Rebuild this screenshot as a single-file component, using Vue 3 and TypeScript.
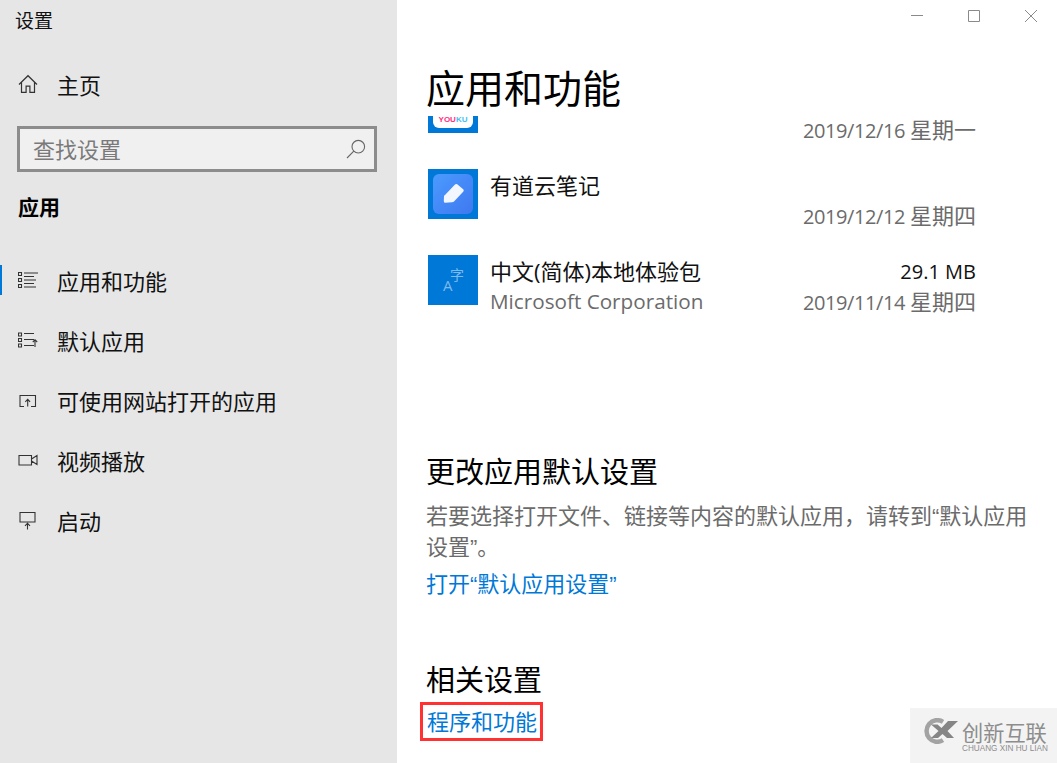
<script setup lang="ts">
interface NavItem { label: string; icon: string; active?: boolean }
const nav: NavItem[] = [
  { label: '应用和功能', icon: 'list', active: true },
  { label: '默认应用', icon: 'defaults' },
  { label: '可使用网站打开的应用', icon: 'web' },
  { label: '视频播放', icon: 'video' },
  { label: '启动', icon: 'startup' },
]
</script>

<template>
  <div class="window">
    <aside class="side">
      <div class="app-title">设置</div>
      <div class="home">
        <svg class="ico" width="20" height="20" viewBox="0 0 20 20" fill="none" stroke="#333" stroke-width="1.2">
          <path d="M1 10.5 10 1.7l9 8.800M3.500 8.500v9.800h4.600v-6.200h3.800v6.200h4.600V8.500" />
        </svg>
        <span>主页</span>
      </div>
      <div class="search">
        <span class="placeholder">查找设置</span>
        <svg width="20" height="20" viewBox="0 0 20 20" fill="none" stroke="#666" stroke-width="1.1">
          <circle cx="12.3" cy="7.7" r="6.3" />
          <path d="M7.8 12.2 1 19" />
        </svg>
      </div>
      <div class="group">应用</div>
      <nav class="nav">
        <div v-for="item in nav" :key="item.label" class="nav-item" :class="{ active: item.active }">
          <svg class="nav-ico" width="20" height="20" viewBox="0 0 20 20" fill="none" stroke="#333" stroke-width="1.1">
            <template v-if="item.icon === 'list'">
              <path d="M.5 2.500h3v3h-3zM.5 8.500h3v3h-3zM.5 14.500h3v3h-3z" />
              <path d="M6 3h14M6 6.500h10M6 10h12M6 13.500h10M6 17h12" />
            </template>
            <template v-else-if="item.icon === 'defaults'">
              <path d="M.5 3h3v3h-3zM.5 8.500h3v3h-3zM.5 14h3v3h-3z" />
              <path d="M6 3.500h10M6 9.500h10M6 15.500h10M17 17V10M14.800 12 17 9.700l2.200 2.300" />
            </template>
            <template v-else-if="item.icon === 'web'">
              <path d="M6 16.500H2V5.500h15.500v11H13M9.700 16.500V9.500M7.300 11.800l2.400-2.400 2.400 2.400" />
            </template>
            <template v-else-if="item.icon === 'video'">
              <path d="M1 5.500h12.500v9.500H1zM13.500 9 19 5.500v9L13.500 11" />
            </template>
            <template v-else>
              <path d="M2 2.500h15v9.500H2zM9.500 19.500V13.500M7 15.800l2.500-2.500 2.500 2.500" />
            </template>
          </svg>
          <span>{{ item.label }}</span>
        </div>
      </nav>
    </aside>

    <main class="content">
      <div class="controls">
        <svg width="12" height="12" viewBox="0 0 12 12" stroke="#8a8a8a" fill="none"><path d="M0 5.500h12" /></svg>
        <svg width="12" height="12" viewBox="0 0 12 12" stroke="#8a8a8a" fill="none"><path d="M.5.500h11v11H.5z" /></svg>
        <svg width="12" height="12" viewBox="0 0 12 12" stroke="#8a8a8a" fill="none"><path d="M0 0l12 12M12 0 0 12" /></svg>
      </div>
      <h1>应用和功能</h1>

      <div class="apps">
        <div class="app app-clipped">
          <div class="tile tile-clip">
            <div class="youku">
              <span class="yk-a">YOU</span><span class="yk-b">KU</span>
            </div>
          </div>
          <div class="date date-clip"><span class="num">2019/12/16</span> 星期一</div>
        </div>

        <div class="app">
          <div class="tile">
            <svg width="50" height="50" viewBox="0 0 50 50">
              <defs>
                <linearGradient id="yd" x1="0" y1="0" x2="1" y2="1">
                  <stop offset="0" stop-color="#4a9bff" />
                  <stop offset="1" stop-color="#3f78f0" />
                </linearGradient>
              </defs>
              <rect x="5" y="5" width="40" height="40" rx="6" fill="url(#yd)" />
              <path d="M17 26 27 15.500q1-1 2.200-.2l6 5q1 1 .2 2.200L26 32.500q-.8.700-2 .8l-6.700.5q-1.500 0-1.500-1.500l.2-5q0-1 1-1.300z" fill="#f2f7ff" />
            </svg>
          </div>
          <div class="app-body">
            <div class="line">
              <span class="name">有道云笔记</span>
            </div>
            <div class="line">
              <span class="pub"></span>
              <span class="date"><span class="num">2019/12/12</span> 星期四</span>
            </div>
          </div>
        </div>

        <div class="app">
          <div class="tile">
            <svg width="50" height="50" viewBox="0 0 50 50">
              <text x="15" y="36" class="lang-a">A</text>
              <text x="22" y="25" class="lang-z">字</text>
            </svg>
          </div>
          <div class="app-body">
            <div class="line">
              <span class="name">中文(简体)本地体验包</span>
              <span class="size">29.1 MB</span>
            </div>
            <div class="line">
              <span class="pub">Microsoft Corporation</span>
              <span class="date"><span class="num">2019/11/14</span> 星期四</span>
            </div>
          </div>
        </div>
      </div>

      <section class="sec-default">
        <h2>更改应用默认设置</h2>
        <p>若要选择打开文件、链接等内容的默认应用，请转到<span class="q">“</span>默认应用设置<span class="q">”</span>。</p>
        <a class="link">打开<span class="q">“</span>默认应用设置<span class="q">”</span></a>
      </section>

      <section class="sec-related">
        <h2>相关设置</h2>
        <a class="link boxed">程序和功能</a>
      </section>

      <div class="watermark">
        <svg width="35" height="26" viewBox="0 0 35 26">
          <path d="M20 3.800A10.800 10.800 0 1 0 20 22.200" fill="none" stroke="#a3a3a3" stroke-width="4.500" />
          <path d="M8 6.500h6.500l4 3.500L25 3h10l-10.500 10 6.500 7h-7l-4.500-4-4.500 4H8l7.500-7z" fill="#858585" />
        </svg>
        <div class="wm-text">
          <div class="wm-cn">创新互联</div>
          <div class="wm-en">CHUANG XIN HU LIAN</div>
        </div>
      </div>
    </main>
  </div>
</template>

<style>
html, body { margin: 0; height: 763px; overflow: hidden; background: #fff; }
</style>

<style scoped>
.window {
  display: flex;
  width: 1057px;
  height: 763px;
  overflow: hidden;
  font-family: "Noto Sans CJK SC", "Noto Sans", sans-serif;
  color: #111;
  background: #fff;
}
.side {
  flex: none;
  width: 397px;
  box-sizing: border-box;
  background: #e6e6e6;
  display: flex;
  flex-direction: column;
}
.app-title { margin: 6px 0 0 15px; font-size: 19px; line-height: 28px; }
.home {
  display: flex;
  align-items: center;
  gap: 19px;
  margin: 35px 0 0 18px;
  font-size: 22px;
  line-height: 30px;
}
.ico { flex: none; }
.search {
  box-sizing: border-box;
  display: flex;
  align-items: center;
  justify-content: space-between;
  width: 360px;
  height: 46px;
  margin: 27px 0 0 17px;
  padding: 0 8px 0 13px;
  border: 3px solid #8c8c8c;
  background: #f0f0f0;
}
.placeholder { font-size: 22px; line-height: 30px; margin-top: -2px; color: #7a7a7a; }
.group { margin: 19px 0 0 18px; font-size: 21px; line-height: 30px; font-weight: 700; color: #000; }
.nav { display: flex; flex-direction: column; margin-top: 29px; }
.nav-item {
  display: flex;
  align-items: center;
  gap: 19px;
  height: 60px;
  padding-left: 18px;
  font-size: 22px;
  position: relative;
}
.nav-item.active::before {
  content: "";
  position: absolute;
  left: 0;
  top: 15px;
  width: 2px;
  height: 30px;
  background: #0078d7;
}
.nav-ico { flex: none; }

.content {
  flex: 1;
  position: relative;
  min-width: 0;
  padding-left: 30px;
  padding-right: 30px;
  display: flex;
  flex-direction: column;
}
.controls {
  display: flex;
  justify-content: flex-end;
  gap: 45px;
  margin-right: -10px;
  padding-top: 10px;
  height: 12px;
}
h1 { margin: 35px 0 1px -1px; font-size: 39px; line-height: 58px; font-weight: 400; color: #000; }
.apps { display: flex; flex-direction: column; margin-right: 51px; }
.app { display: flex; gap: 12px; margin-left: 1px; margin-bottom: 25px; }
.app-clipped { justify-content: space-between; margin-bottom: 36px; height: 17px; }
.tile { flex: none; width: 50px; height: 50px; background: #0078d7; }
.tile-clip { height: 17px; overflow: hidden; display: flex; justify-content: center; align-items: flex-end; }
.youku {
  box-sizing: border-box;
  width: 40px;
  height: 12px;
  margin-bottom: 5px;
  background: #fff;
  border-radius: 0 0 6px 6px;
  text-align: center;
  font: 700 8px/8px "Liberation Sans", sans-serif;
}
.yk-a { color: #ff2e7e; }
.yk-b { color: #3ec3f5; }
.lang-a { font: 15px "Open Sans", sans-serif; fill: #7db8ef; }
.lang-z { font: 14px "Noto Sans CJK SC", sans-serif; fill: #7db8ef; }
.date { font-size: 22px; line-height: 30px; color: #6b6b6b; white-space: nowrap; }
.line .date { margin-top: -1px; }
.date-clip { margin-top: -3px; }
.num { font-family: "Open Sans", sans-serif; font-size: 20px; letter-spacing: -0.4px; }
.app-body { flex: 1; display: flex; flex-direction: column; margin-top: 1px; }
.line { display: flex; justify-content: space-between; height: 30px; line-height: 30px; font-size: 22px; white-space: nowrap; }
.name { color: #111; font-family: "Open Sans", "Noto Sans CJK SC", sans-serif; }
.size { color: #111; margin-top: 1px; font-family: "Open Sans", sans-serif; font-size: 20px; }
.pub { color: #6b6b6b; font-family: "Open Sans", sans-serif; font-size: 20.7px; }

h2 { margin: 0 0 0 -1px; font-size: 29px; line-height: 40px; font-weight: 400; color: #000; }
.sec-default { margin-top: 109px; }
.sec-default p { margin: 9px -8px 0 -1px; font-size: 22px; line-height: 31px; color: #6b6b6b; }
.q { font-family: "Liberation Sans", sans-serif; line-height: 1; }
.link { display: block; margin-left: -1px; font-size: 22px; line-height: 30px; color: #0078d7; }
.sec-default .link { margin-top: 6px; }
.sec-related { margin-top: 61px; }
.boxed {
  width: max-content;
  margin: 4px 0 0 -7px;
  padding: 0 3px 3px 4px;
  border: 3px solid #ff3131;
}
.watermark {
  position: absolute;
  right: 0;
  bottom: 0;
  box-sizing: border-box;
  width: 147px;
  height: 55px;
  display: flex;
  align-items: flex-start;
  gap: 4px;
  padding: 10px 0 0 13px;
  background: #f3f3f3;
}
.wm-text { color: #8d8d8d; margin-top: 3px; }
.wm-cn { font-size: 21.2px; line-height: 21px; }
.wm-en { font: 8.2px/9px "Liberation Sans", sans-serif; margin-top: 2px; }
</style>
